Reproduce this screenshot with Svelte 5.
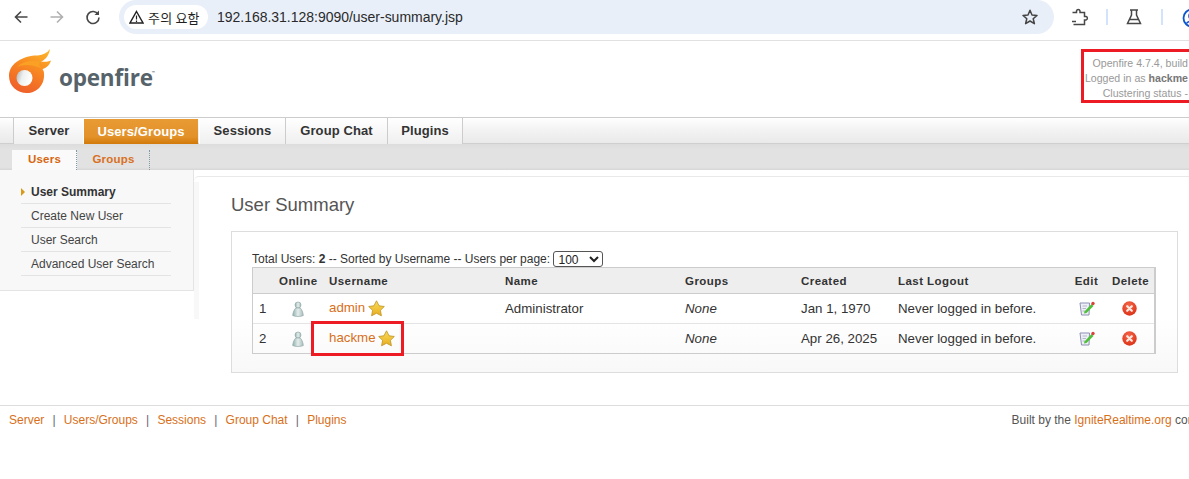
<script>
  const tabs = [
    { label: 'Server', w: 71 },
    { label: 'Users/Groups', w: 115, active: true },
    { label: 'Sessions', w: 86 },
    { label: 'Group Chat', w: 102 },
    { label: 'Plugins', w: 76 }
  ];
  const side = ['User Summary', 'Create New User', 'User Search', 'Advanced User Search'];
  const users = [
    { n: 1, user: 'admin', name: 'Administrator', created: 'Jan 1, 1970' },
    { n: 2, user: 'hackme', name: '', created: 'Apr 26, 2025', mark: true }
  ];
  const foot = ['Server', 'Users/Groups', 'Sessions', 'Group Chat', 'Plugins'];
</script>

<div class="chrome">
  <svg class="ic" width="18" height="18" viewBox="0 0 18 18"><path d="M15.500 9H3.500M9 3.500 3.500 9 9 14.500" fill="none" stroke="#474747" stroke-width="1.600"/></svg>
  <svg class="ic fwd" width="18" height="18" viewBox="0 0 18 18"><path d="M2.500 9H14.500M9 3.500 14.500 9 9 14.500" fill="none" stroke="#b0b0b0" stroke-width="1.600"/></svg>
  <svg class="ic rel" width="18" height="18" viewBox="0 0 18 18"><path d="M14.200 6.500A6 6 0 1 0 15 9.500" fill="none" stroke="#474747" stroke-width="1.600"/><path d="M15 2.500V7H10.500Z" fill="#474747"/></svg>
  <div class="omni">
    <div class="chip">
      <svg width="15" height="14" viewBox="0 0 15 14"><path d="M7.500 1.500 14 13H1Z" fill="none" stroke="#222" stroke-width="1.400"/><path d="M7.500 5.500V9.500M7.500 10.500V12" stroke="#222" stroke-width="1.200"/></svg>
      <span>주의 요함</span>
    </div>
    <span class="url">192.168.31.128:9090/user-summary.jsp</span>
    <svg class="star" width="18" height="18" viewBox="0 0 18 18"><path d="M9 2.300 11 7 16 7.400 12.200 10.700 13.400 15.700 9 13 4.600 15.700 5.800 10.700 2 7.400 7 7Z" fill="none" stroke="#444" stroke-width="1.500" stroke-linejoin="round"/></svg>
  </div>
  <svg class="ic ext" width="20" height="20" viewBox="0 0 20 20"><path d="M3.500 4.500H7.500V3A1.800 1.800 0 0 1 11 3V4.500H15.500V8.500H17A1.800 1.800 0 0 1 17 12H15.500V16.500H4.500M3 13.500 7 13.500" fill="none" stroke="#474747" stroke-width="1.500"/></svg>
  <span class="sep"></span>
  <svg class="ic flask" width="16" height="18" viewBox="0 0 16 18"><path d="M4 2H12M5.500 2V7L1.500 15.500H14.500L10.500 7V2M3.500 11.500H12.500" fill="none" stroke="#474747" stroke-width="1.500"/></svg>
  <span class="sep two"></span>
  <svg class="ic prof" width="20" height="20" viewBox="0 0 20 20"><circle cx="10" cy="10" r="8.500" fill="none" stroke="#0b57d0" stroke-width="1.800"/><circle cx="10" cy="8" r="3" fill="none" stroke="#0b57d0" stroke-width="1.600"/><path d="M4.500 15.500C6 12.500 14 12.500 15.500 15.500" fill="none" stroke="#0b57d0" stroke-width="1.600"/></svg>
</div>

<header class="top">
  <div class="logo">
    <svg width="46" height="46" viewBox="8 48 46 46">
      <defs>
        <linearGradient id="fl" x1="0.700" y1="0" x2="0.300" y2="1"><stop offset="0" stop-color="#fcb12a"/><stop offset="0.350" stop-color="#f98f22"/><stop offset="0.700" stop-color="#f37325"/><stop offset="1" stop-color="#ef5f2b"/></linearGradient>
        <linearGradient id="hole" x1="0" y1="0" x2="1" y2="0.300"><stop offset="0" stop-color="#a9aeae"/><stop offset="0.450" stop-color="#eef0f0"/><stop offset="1" stop-color="#fff"/></linearGradient>
      </defs>
      <path fill="url(#fl)" d="M50 49C47 53 43 55 38 55.500 26 55 9 62 9 76 9 86 17 93 27 93 37 93 45 85 44 73 44 71 43 70 42.500 69 47 68 50 64 51 60.500 48 62 44 62 41 61.500 46 59.500 49 55 50 49Z"/>
      <path fill="#f9a025" d="M41 61.500C35 60 24 60 17 67 23 64 33 64 42.500 69 39 66 38 63 41 61.500Z"/>
      <circle cx="24.500" cy="78" r="8" fill="url(#hole)"/>
    </svg>
    <span class="brand">openfire<sup>™</sup></span>
  </div>
  <div class="info">
    <div>Openfire 4.7.4, build</div>
    <div>Logged in as <b>hackme</b></div>
    <div>Clustering status -</div>
  </div>
</header>

<nav class="tabs">
  {#each tabs as t}
    <a class="tab" class:on={t.active} style="width:{t.w}px">{t.label}</a>
  {/each}
</nav>
<nav class="sub">
  <a class="st on">Users</a>
  <a class="st">Groups</a>
</nav>

<main class="main">
  <aside class="sidebar">
    <ul>
      {#each side as s, i}
        <li class:cur={i === 0}>{s}</li>
      {/each}
    </ul>
  </aside>
  <div class="right">
    <div class="strip"></div>
    <section class="content">
      <h1>User Summary</h1>
      <div class="panel">
        <div class="meta">
          Total Users: <b>2</b> -- Sorted by Username -- Users per page:
          <select><option>100</option></select>
        </div>
        <table>
          <colgroup>
            <col style="width:20px"/><col style="width:50px"/><col style="width:176px"/><col style="width:180px"/><col style="width:116px"/><col style="width:97px"/><col style="width:174px"/><col style="width:41px"/><col style="width:47px"/>
          </colgroup>
          <thead>
            <tr>
              <th></th><th>Online</th><th>Username</th><th>Name</th><th>Groups</th><th>Created</th><th>Last Logout</th><th class="c">Edit</th><th class="c">Delete</th>
            </tr>
          </thead>
          <tbody>
            {#each users as u}
              <tr>
                <td>{u.n}</td>
                <td class="c">
                  <svg class="mid" width="12" height="16" viewBox="0 0 12 16">
                    <defs><linearGradient id="pg" x1="0" y1="0" x2="1" y2="0"><stop offset="0" stop-color="#8fb0ad"/><stop offset="0.500" stop-color="#e4eeec"/><stop offset="1" stop-color="#a8bcbb"/></linearGradient></defs>
                    <circle cx="6" cy="4" r="3" fill="url(#pg)" stroke="#94a9a9" stroke-width=".7"/><path d="M3.800 7C2 8.500 1 11.500 .7 14.500 3 15.800 9 15.800 11.300 14.500 11 11.500 10 8.500 8.200 7Z" fill="url(#pg)" stroke="#94a9a9" stroke-width=".7"/></svg>
                </td>
                <td class="ucell">
                  <a class="lnk">{u.user}</a>
                  <svg class="mid st-ic" width="17" height="17" viewBox="0 0 17 17">
                    <defs><linearGradient id="sg" x1="0" y1="0" x2="0" y2="1"><stop offset="0" stop-color="#f9dc5c"/><stop offset="1" stop-color="#e9ac1c"/></linearGradient></defs>
                    <path d="M8.500 .8 11 5.800 16.300 6.500 12.400 10.300 13.400 15.800 8.500 13.200 3.600 15.800 4.600 10.300 .7 6.500 6 5.800Z" fill="url(#sg)" stroke="#c49a2c" stroke-width=".9" stroke-linejoin="round"/></svg>
                  {#if u.mark}<span class="mark"></span>{/if}
                </td>
                <td>{u.name}</td>
                <td><i>None</i></td>
                <td>{u.created}</td>
                <td>Never logged in before.</td>
                <td class="c">
                  <svg class="mid" width="16" height="15" viewBox="0 0 16 15"><path d="M1 2H10.500L10 14H2.500Z" fill="#eef0f6" stroke="#8d8fb5"/><path d="M3.500 5H8M3.500 7.500H7M3.500 10H6" stroke="#b4b6cc"/><path d="M5.500 10.500 12.500 3 14.500 5 7.500 12 5 12.500Z" fill="#4fbf3a"/><circle cx="14" cy="2.500" r="1.700" fill="#d8433a"/></svg>
                </td>
                <td class="c del">
                  <svg class="mid" width="15" height="15" viewBox="0 0 15 15">
                    <defs><radialGradient id="rg" cx="0.450" cy="0.300" r="0.800"><stop offset="0" stop-color="#f4674a"/><stop offset="1" stop-color="#d92a10"/></radialGradient></defs>
                    <circle cx="7.500" cy="7.500" r="7.200" fill="url(#rg)"/><path d="M5.200 5.200 9.800 9.800M9.800 5.200 5.200 9.800" stroke="#fde8e0" stroke-width="2.200" stroke-linecap="round"/></svg>
                </td>
              </tr>
            {/each}
          </tbody>
        </table>
      </div>
    </section>
  </div>
</main>

<footer class="foot">
  <div>
    {#each foot as f, i}
      {#if i > 0}<span class="bar">|</span>{/if}<a class="lnk">{f}</a>
    {/each}
  </div>
  <div class="built">Built by the <a class="lnk">IgniteRealtime.org</a> community</div>
</footer>

<style>
  :global(body) { margin: 0; background: #fff; font-family: "Liberation Sans", Arial, sans-serif; font-size: 12px; color: #333; overflow: hidden; }
  a { text-decoration: none; }

  .chrome { display: flex; align-items: flex-start; height: 40px; border-bottom: 1px solid #e1e1e1; position: relative; overflow: hidden; }
  .ic { flex: none; margin-top: 8px; }
  .chrome > .ic:first-child { margin-left: 12px; }
  .fwd { margin-left: 18px; }
  .rel { margin-left: 18px; }
  .omni { flex: none; margin-left: 17px; width: 935px; height: 34px; box-sizing: border-box; background: #e9eff9; border-radius: 17px; display: flex; align-items: center; padding-left: 5px; }
  .chip { display: flex; align-items: center; gap: 4px; width: 84px; height: 24px; box-sizing: border-box; padding-left: 5px; background: #fff; border-radius: 12px; font: 13px "Noto Sans CJK KR", "Liberation Sans", sans-serif; letter-spacing: .2px; color: #1f1f1f; white-space: nowrap; }
  .url { margin-left: 9px; font: 14px "Liberation Sans", Arial, sans-serif; letter-spacing: -.02px; color: #2a2a2a; }
  .star { margin-left: auto; margin-right: 15px; }
  .ext { margin-left: 15px; }
  .sep { flex: none; width: 2px; height: 16px; background: #d3e3fd; margin: 9px 0 0 17px; }
  .flask { margin-left: 18px; }
  .sep.two { margin-left: 19px; }
  .prof { margin-left: 19px; }

  .top { display: flex; justify-content: space-between; height: 76px; box-sizing: border-box; }
  .logo { display: flex; align-items: flex-start; margin-left: 8px; padding-top: 7px; }
  .brand { margin: 14px 0 0 5px; font: 700 22.500px "Open Sans", sans-serif; color: #56636a; letter-spacing: -.2px; line-height: 32px; }
  .brand sup { font-size: 4px; vertical-align: 12px; line-height: 0; margin-left: -1px; }
  .info { flex: none; margin: 8px -10px 0 0; width: 118px; height: 54px; box-sizing: border-box; border: 3px solid #ed1c24; border-right: 0; padding: 4px 11px 0 0; text-align: right; font-size: 10.600px; color: #999; line-height: 15px; white-space: nowrap; }
  .info b { color: #777; }

  .tabs { display: flex; height: 26px; padding-left: 13px; border-top: 1px solid #ccc; background: linear-gradient(#fff, #f4f4f4 40%, #e9e9e9); box-shadow: inset 0 -1px 0 #cfcfcf; }
  .tab { box-sizing: border-box; height: 26px; padding-bottom: 2px; display: flex; align-items: center; justify-content: center; border-left: 1px solid #ccc; background: linear-gradient(#fff, #efefef); font-weight: 700; font-size: 13px; color: #333; letter-spacing: .1px; }
  .tab:last-child { border-right: 1px solid #ccc; }
  .tab.on { color: #fff; background: linear-gradient(#e89a33, #e3922a 70%, #d27a0a); margin: 1px 0 0 -1px; height: 25px; border-left: 1px solid #fff; padding-bottom: 1px; }
  .tab.on + .tab { border-left: 1px solid #fff; margin-left: 1px; }

  .sub { display: flex; height: 26px; padding-left: 12px; background: linear-gradient(#dcdcdc, #e2e2e2 20%, #e2e2e2 90%, #d6d6d6); box-sizing: border-box; align-items: flex-end; }
  .st { box-sizing: border-box; height: 20px; padding: 0 0 2px 1px; display: flex; align-items: center; justify-content: center; width: 65px; font-weight: 700; font-size: 11.500px; color: #d9701d; border-right: 1px dotted #7f9aa8; letter-spacing: .2px; }
  .st + .st { width: 73px; }
  .st.on { background: #fafafa; color: #d8660f; }

  .main { display: flex; align-items: flex-start; }
  .sidebar { flex: none; width: 194px; height: 121px; box-sizing: border-box; background: #f8f8f8; border-right: 1px solid #e4e4e4; border-bottom: 1px solid #e4e4e4; padding: 10px 22px 0 21px; }
  .sidebar ul { list-style: none; margin: 0; padding: 0; }
  .sidebar li { height: 24px; box-sizing: border-box; border-bottom: 1px solid #e4e4e4; padding-left: 10px; line-height: 25px; color: #444; position: relative; }
  .sidebar li.cur { font-weight: 700; color: #333; }
  .sidebar li.cur::before { content: ""; position: absolute; left: 0; top: 8px; border-left: 4px solid #d99a18; border-top: 4px solid transparent; border-bottom: 4px solid transparent; }

  .right { flex: 1; min-width: 0; display: flex; margin-top: 6px; border-top: 1px solid #e9e9e9; border-top-left-radius: 5px; }
  .strip { flex: none; width: 5px; height: 137px; margin-top: 5px; background: #f8f8f8; }
  .content { flex: 1; min-width: 0; padding: 0 11px 0 32px; }
  h1 { margin: 0; padding-top: 17px; font-weight: 400; font-size: 18.500px; line-height: 22px; color: #555; height: 54px; box-sizing: border-box; }
  .panel { border: 1px solid #ddd; height: 142px; box-sizing: border-box; padding: 18px 21px 0 20px; background: linear-gradient(#fff 60%, #f8f8f8); }
  .meta { height: 17px; display: flex; align-items: center; white-space: pre; font-size: 12px; color: #333; }
  select { margin-left: 0; width: 50px; height: 16px; font: 12px "Liberation Sans", sans-serif; padding: 0; border: 1px solid #555; border-radius: 3px; background: #fff; color: #222; }

  table { border-collapse: separate; border-spacing: 0; table-layout: fixed; width: 901px; font-size: 13.300px; color: #333; border-left: 1px solid #ccc; border-right: 2px solid #ccc; border-bottom: 1px solid #ccc; }
  th { height: 25px; padding: 0 0 0 6px; background: #eee; border-top: 1px solid #ccc; border-bottom: 1px solid #ccc; text-align: left; font-size: 11.500px; font-weight: 700; color: #333; letter-spacing: .45px; }
  td { height: 29px; padding: 0 0 0 6px; border-bottom: 1px solid #e4e4e4; }
  tbody tr:last-child td { border-bottom: 0; }
  .c { text-align: center; padding: 0; }
  td.del { padding-right: 3px; }
  .mid { vertical-align: middle; }
  .lnk { color: #d8701a; }
  .ucell { position: relative; }
  .st-ic { margin-left: -1px; }
  .mark { position: absolute; left: -12px; top: -3px; width: 93px; height: 35px; box-sizing: border-box; border: 3px solid #ed1c24; }

  .foot { display: flex; justify-content: space-between; margin-top: 32px; border-top: 1px solid #ddd; padding: 7px 0 0 9px; font-size: 12px; line-height: 14px; }
  .bar { margin: 0 8.200px; color: #667; }
  .built { color: #555; white-space: nowrap; margin-right: -44px; }
</style>
